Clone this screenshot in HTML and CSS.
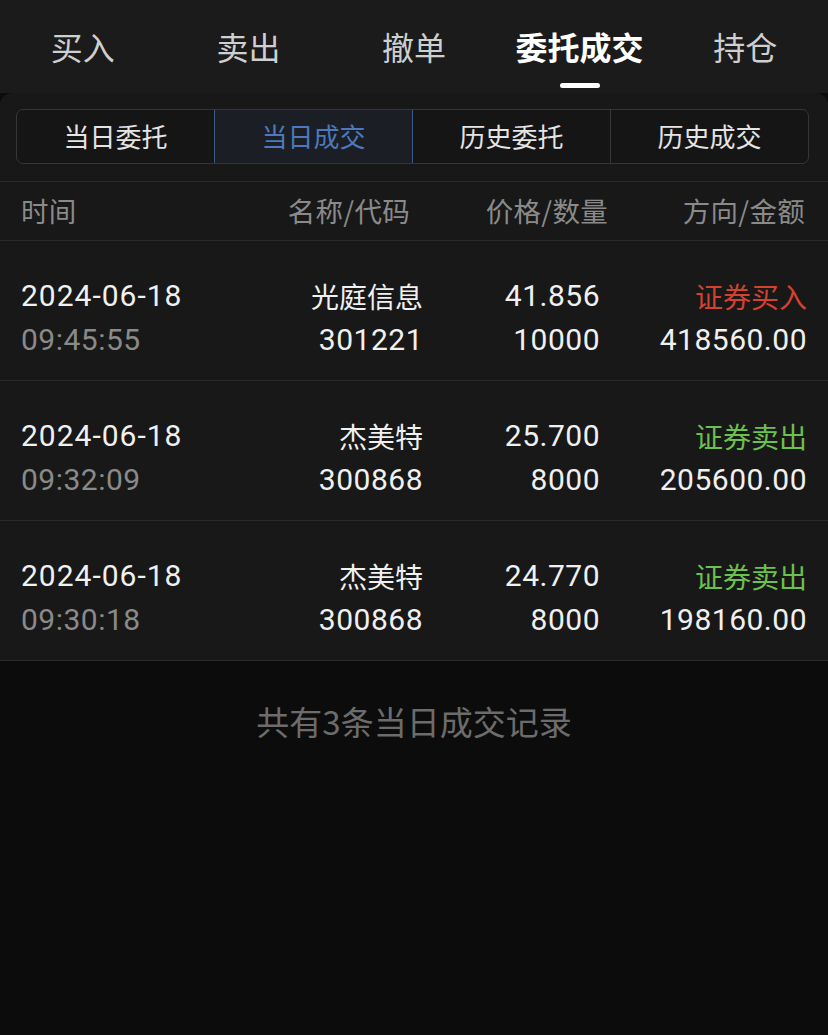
FILE: index.html
```html
<!DOCTYPE html>
<html lang="zh-CN">
<head>
<meta charset="utf-8">
<title>委托成交</title>
<link rel="stylesheet" href="styles.css">
</head>
<body>
<div class="app">
  <nav class="topbar">
    <div class="tab"><span class="tab-label">买入</span></div>
    <div class="tab"><span class="tab-label">卖出</span></div>
    <div class="tab"><span class="tab-label">撤单</span></div>
    <div class="tab active"><span class="tab-label">委托成交</span><span class="indicator"></span></div>
    <div class="tab"><span class="tab-label">持仓</span></div>
  </nav>
  <section class="panel">
    <div class="seg-wrap">
      <div class="segments">
        <div class="seg">当日委托</div>
        <div class="seg active">当日成交</div>
        <div class="seg">历史委托</div>
        <div class="seg">历史成交</div>
      </div>
    </div>
    <div class="head">
      <div class="cell left">时间</div>
      <div class="cell">名称/代码</div>
      <div class="cell">价格/数量</div>
      <div class="cell">方向/金额</div>
    </div>
    <div class="row item">
      <div class="cell left"><div class="l1 num date">2024-06-18</div><div class="l2 num muted">09:45:55</div></div>
      <div class="cell"><div class="l1 cn">光庭信息</div><div class="l2 num">301221</div></div>
      <div class="cell"><div class="l1 num">41.856</div><div class="l2 num">10000</div></div>
      <div class="cell"><div class="l1 cn buy">证券买入</div><div class="l2 num">418560.00</div></div>
    </div>
    <div class="row item">
      <div class="cell left"><div class="l1 num date">2024-06-18</div><div class="l2 num muted">09:32:09</div></div>
      <div class="cell"><div class="l1 cn">杰美特</div><div class="l2 num">300868</div></div>
      <div class="cell"><div class="l1 num">25.700</div><div class="l2 num">8000</div></div>
      <div class="cell"><div class="l1 cn sell">证券卖出</div><div class="l2 num">205600.00</div></div>
    </div>
    <div class="row item">
      <div class="cell left"><div class="l1 num date">2024-06-18</div><div class="l2 num muted">09:30:18</div></div>
      <div class="cell"><div class="l1 cn">杰美特</div><div class="l2 num">300868</div></div>
      <div class="cell"><div class="l1 num">24.770</div><div class="l2 num">8000</div></div>
      <div class="cell"><div class="l1 cn sell">证券卖出</div><div class="l2 num">198160.00</div></div>
    </div>
  </section>
  <p class="footer">共有3条当日成交记录</p>
</div>
</body>
</html>
```

FILE: styles.css
```css
* { box-sizing: border-box; }
html, body {
  margin: 0;
  padding: 0;
  background: #0c0c0c;
  font-family: "Liberation Sans", "Noto Sans CJK SC", sans-serif;
}
.app {
  width: 828px;
  min-height: 1035px;
  background: #0c0c0c;
}
.topbar {
  display: flex;
  height: 93px;
  background: #1b1b1b;
}
.tab {
  flex: 1;
  display: flex;
  flex-direction: column;
  align-items: center;
  padding-top: 24px;
}
.tab-label {
  font-family: "Noto Sans CJK SC", sans-serif;
  font-size: 32px;
  line-height: 44px;
  color: #cfcfcf;
}
.tab.active .tab-label {
  color: #ffffff;
  font-weight: 700;
}
.indicator {
  width: 40px;
  height: 5px;
  margin-top: 15px;
  border-radius: 3px;
  background: #ffffff;
}
.panel {
  background: #181818;
  border-radius: 12px 12px 0 0;
}
.seg-wrap {
  padding: 16px 19px 17px 16px;
  border-bottom: 1px solid #2a2a2a;
}
.segments {
  display: flex;
  height: 55px;
  border: 1px solid #363636;
  border-radius: 7px;
  overflow: hidden;
  background: #151515;
}
.seg {
  flex: 1;
  display: flex;
  align-items: center;
  justify-content: center;
  padding-bottom: 2px;
  font-family: "Noto Sans CJK SC", sans-serif;
  font-size: 26px;
  color: #e4e4e4;
  border-left: 1px solid #363636;
}
.seg:first-child { border-left: none; }
.seg.active {
  background: #1b1e25;
  color: #4c79bd;
  border-left: 1px solid #3f5a80;
  border-right: 1px solid #3f5a80;
}
.seg.active + .seg { border-left: none; }
.cell { text-align: right; }
.cell.left { text-align: left; }
.head {
  display: grid;
  grid-template-columns: 1fr 200px 198px 197px;
  padding: 0 23px 2px 21px;
  height: 59px;
  align-items: center;
  border-bottom: 1px solid #2a2a2a;
}
.head .cell {
  font-family: "Noto Sans CJK SC", sans-serif;
  font-size: 27.5px;
  line-height: 36px;
  letter-spacing: 0.3px;
  color: #8a8a8a;
}
.row {
  display: grid;
  grid-template-columns: 202px 200px 177px 207px;
  padding: 0 21px;
  border-bottom: 1px solid #2a2a2a;
}
.item {
  height: 140px;
  padding-top: 33px;
}
.l1, .l2 {
  height: 44px;
  line-height: 44px;
  white-space: nowrap;
  color: #f0f0f0;
}
.num {
  font-family: Roboto, "Liberation Sans", sans-serif;
  font-weight: 400;
  font-size: 30px;
  letter-spacing: 0.5px;
}
.num.date { letter-spacing: 1px; }
.cn {
  font-family: "Noto Sans CJK SC", sans-serif;
  font-size: 28px;
}
.muted { color: #8a8a8a; }
.buy { color: #d3412f; }
.sell { color: #6cc04d; }
.footer {
  margin: 0;
  padding-top: 38px;
  text-align: center;
  font-family: "Noto Sans CJK SC", sans-serif;
  font-size: 33px;
  line-height: 44px;
  color: #6c6c6c;
}
```
